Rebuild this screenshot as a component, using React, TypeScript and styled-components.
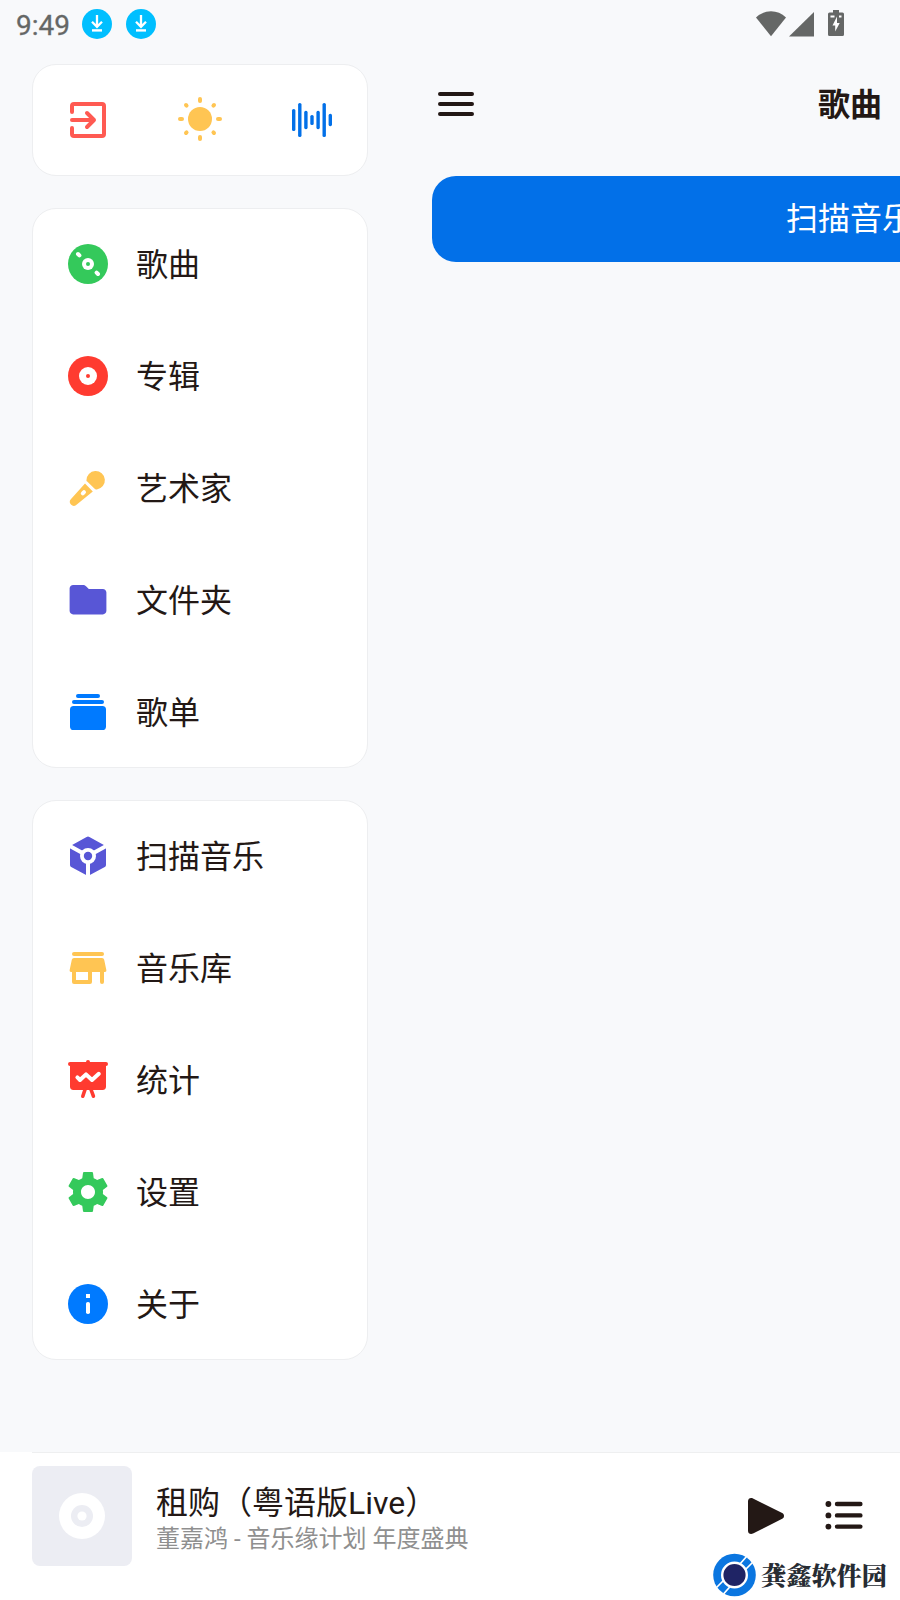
import React from 'react';
import styled, { createGlobalStyle } from 'styled-components';

const GlobalStyle = createGlobalStyle`
  * { box-sizing: border-box; }
  html, body { margin: 0; padding: 0; }
  body {
    background: #f8f9fb;
    color: #231815;
    font-family: Roboto, 'Noto Sans CJK SC', sans-serif;
    overflow: hidden;
  }
`;

const Screen = styled.div`
  width: 900px;
  height: 1600px;
  display: flex;
  flex-direction: column;
  overflow: hidden;
  background: #f8f9fb;
`;

const StatusBar = styled.header`
  height: 48px;
  flex: none;
  display: flex;
  align-items: center;
  padding: 0 56px 0 16px;
  color: #656766;
`;

const Clock = styled.span`
  width: 66px;
  font: 400 28px/48px Roboto, sans-serif;
  -webkit-text-stroke: 0.3px currentColor;
  padding-top: 3px;
`;

const Notices = styled.div`
  display: flex;
  gap: 14px;
  flex: 1;
`;

const Signals = styled.div`
  display: flex;
  align-items: flex-start;
  height: 28px;
`;

const Body = styled.div`
  flex: 1;
  min-height: 0;
  display: flex;
`;

const Drawer = styled.nav`
  width: 400px;
  flex: none;
  padding: 16px 32px 0;
  display: flex;
  flex-direction: column;
  gap: 32px;
`;

const Card = styled.section`
  background: #fff;
  border: 1px solid #edeef0;
  border-radius: 24px;
  overflow: hidden;
`;

const QuickActions = styled(Card)`
  height: 112px;
  display: grid;
  grid-template-columns: repeat(3, 112px);
  place-items: center;
  justify-content: center;
`;

const MenuCard = styled(Card)`
  height: 560px;
  display: flex;
  flex-direction: column;
  justify-content: center;
`;

const MenuRow = styled.a`
  height: 112px;
  flex: none;
  display: flex;
  align-items: center;
  gap: 24px;
  padding-left: 31px;
  font-size: 32px;
  line-height: 48px;
`;

const Label = styled.span`
  white-space: nowrap;
  padding-top: 2px;
`;

const Page = styled.main`
  width: 900px;
  flex: none;
  padding: 0 32px;
`;

const TitleBar = styled.div`
  height: 112px;
  display: grid;
  grid-template-columns: 48px 1fr 48px;
  align-items: center;
`;

const Title = styled.h1`
  margin: 0;
  padding-top: 2px;
  text-align: center;
  font-size: 32px;
  line-height: 48px;
  font-weight: 700;
`;

const ScanButton = styled.button`
  margin-top: 16px;
  width: 100%;
  height: 86px;
  border: 0;
  border-radius: 24px;
  background: #0270e8;
  color: #fff;
  font: 400 32px/48px Roboto, 'Noto Sans CJK SC', sans-serif;
`;

const Player = styled.footer`
  position: relative;
  height: 148px;
  flex: none;
  background: #fff;
  padding: 14px 32px 0;
  display: flex;
  align-items: flex-start;
`;

const Divider = styled.div`
  position: absolute;
  top: 0;
  left: 32px;
  right: 0;
  height: 1px;
  background: #eeeff0;
`;

const Cover = styled.div`
  width: 100px;
  height: 100px;
  border-radius: 8px;
  background: #ecedf3;
  display: grid;
  place-items: center;
`;

const Track = styled.div`
  flex: 1;
  padding: 16px 0 0 24px;
  white-space: nowrap;
`;

const Song = styled.div`
  font-size: 32px;
  line-height: 42px;
`;

const Artist = styled.div`
  font-size: 24px;
  line-height: 30px;
  color: #8f8f8f;
`;

const Controls = styled.div`
  display: flex;
  gap: 30px;
  padding-top: 26px;
`;

const Watermark = styled.div`
  position: absolute;
  left: 713px;
  top: 100px;
  display: flex;
  align-items: center;
  gap: 5px;
  height: 46px;
  color: #272c33;
  white-space: nowrap;
`;

const Brand = styled.span`
  font: 900 25.2px/46px 'Noto Serif CJK SC', 'Noto Sans CJK SC', serif;
  padding-bottom: 3px;
`;

const Svg = styled.svg<{ $tint?: string }>`
  display: block;
  flex: none;
  overflow: visible;
  color: ${(p) => p.$tint ?? 'inherit'};
`;

type GlyphProps = { tint?: string; children: React.ReactNode };

const Glyph = ({ tint, children }: GlyphProps) => (
  <Svg $tint={tint} width="48" height="48" viewBox="0 0 24 24" fill="currentColor">
    {children}
  </Svg>
);

const GREEN = '#34c95b';
const RED = '#ff3b30';
const AMBER = '#ffc553';
const PURPLE = '#5856d6';
const BLUE = '#007aff';

const stroke = (width = 2) => ({
  fill: 'none',
  stroke: 'currentColor',
  strokeWidth: width,
  strokeLinecap: 'round' as const,
  strokeLinejoin: 'round' as const,
});

const ExitIcon = () => (
  <Glyph tint="#ff5a52">
    <g {...stroke()}>
      <path d="M4 8V5a1 1 0 0 1 1-1h14a1 1 0 0 1 1 1v14a1 1 0 0 1-1 1H5a1 1 0 0 1-1-1v-3" />
      <path d="M4 12h11M11.5 8.5 15 12l-3.5 3.5" />
    </g>
  </Glyph>
);

const SunIcon = () => (
  <Glyph tint={AMBER}>
    <g transform="translate(0 -.5)">
      <circle cx="12" cy="12" r="6" />
      {[0, 90, 180, 270].map((a) => (
        <path key={a} d="M12 2v1" transform={`rotate(${a} 12 12)`} {...stroke(2)} />
      ))}
      {[45, 135, 225, 315].map((a) => (
        <path key={a} d="M12 2.1v.4" transform={`rotate(${a} 12 12)`} {...stroke(2)} />
      ))}
    </g>
  </Glyph>
);

const WaveIcon = () => (
  <Glyph tint="#0270e8">
    {[
      [2, 11],
      [5.05, 17],
      [8.1, 9.2],
      [11.15, 5],
      [14.2, 9.2],
      [17.25, 17],
      [20.3, 6.2],
    ].map(([x, h]) => (
      <rect key={x} x={x} y={12 - h / 2} width="1.7" height={h} rx=".8" />
    ))}
  </Glyph>
);

const SongIcon = () => (
  <Glyph tint={GREEN}>
    <circle cx="12" cy="12" r="10" />
    <circle cx="12" cy="12" r="3" fill="#fff" />
    <circle cx="12" cy="12" r="1" />
    <path d="m7 7 .7.7m8.600 8.600.7.7" {...stroke(2)} stroke="#fff" />
  </Glyph>
);

const AlbumIcon = () => (
  <Glyph tint={RED}>
    <circle cx="12" cy="12" r="10" />
    <circle cx="12" cy="12" r="4.500" fill="#fff" />
    <circle cx="12" cy="12" r="1" />
  </Glyph>
);

const MicIcon = () => (
  <Glyph tint={AMBER}>
    <path d="M11.200 8.200a4.620 4.620 0 1 1 5.200 4.500c-.5.1-.8 0-1.200-.4l-3.600-3.500c-.2-.2-.3-.3-.4-.6z" />
    <path d="M10.500 9.700 14.400 13.800 6.100 20.500a2 2 0 0 1-2.700-2.900z" />
    <path d="m9.400 14.700.6-.6" {...stroke(2)} stroke="#fff" />
  </Glyph>
);

const FolderIcon = () => (
  <Glyph tint={PURPLE}>
    <path d="M4.600 4.500h4.800c.7 0 1.200.2 1.600.6l1.400 1.400h7c1 0 1.800.8 1.800 1.800v9.100c0 1-.8 1.800-1.800 1.800H4.600c-1 0-1.800-.8-1.800-1.800V6.300c0-1 .8-1.800 1.800-1.800z" />
  </Glyph>
);

const PlaylistIcon = () => (
  <Glyph tint={BLUE}>
    <rect x="6" y="3" width="12" height="2" rx="1" />
    <rect x="4" y="6" width="16" height="2" rx="1" />
    <rect x="3" y="9" width="18" height="12" rx="1.800" />
  </Glyph>
);

const CubeIcon = () => (
  <Glyph tint={PURPLE}>
    <path d="M11.300 2.500q.7-.4 1.400 0L20.400 6.700q.6.3.6 1v8.800q0 .7-.6 1L12.700 21.600q-.7.4-1.400 0L3.600 17.500q-.6-.3-.6-1V7.700q0-.7.6-1z" />
    <path d="M12 12 2 6.500M12 12l10-5.500M12 12v11" stroke="#fff" strokeWidth="2" />
    <circle cx="12" cy="12" r="4" fill="#fff" />
    <circle cx="12" cy="12" r="2.100" />
  </Glyph>
);

const StoreIcon = () => (
  <Glyph tint={AMBER}>
    <rect x="4" y="4" width="16" height="2" rx="1" />
    <path d="M5 7h14q.9 0 1.100.9l1.100 5.200q.1.9-.7.9H20v5a1 1 0 0 1-2 0v-5h-4v5a1 1 0 0 1-1 1H5a1 1 0 0 1-1-1v-5h-.5q-.8 0-.7-.9l1.100-5.200Q4.100 7 5 7zm1 7v4h6v-4z" />
  </Glyph>
);

const StatsIcon = () => (
  <Glyph tint={RED}>
    <path d="M3 4h18v11.300a1.700 1.700 0 0 1-1.700 1.700H4.700A1.700 1.700 0 0 1 3 15.300z" />
    <path d="M3 4h18M12 3v1" {...stroke(2)} />
    <path d="m10.600 16.500-1.200 3.600M13.400 16.500l1.300 3.600" {...stroke(1.8)} />
    <path d="M6.700 10.700 8 12l3-2.800 3 2.800 3.400-3.100" {...stroke(2)} stroke="#fff" />
  </Glyph>
);

const SettingsIcon = () => (
  <Glyph tint={GREEN}>
    <path d="M19.43 12.98c.04-.32.07-.64.07-.98s-.03-.66-.07-.98l2.11-1.65c.19-.15.24-.42.12-.64l-2-3.46c-.12-.22-.39-.3-.61-.22l-2.49 1c-.52-.4-1.08-.73-1.69-.98l-.38-2.65C14.46 2.18 14.25 2 14 2h-4c-.25 0-.46.18-.49.42l-.38 2.65c-.61.25-1.17.59-1.69.98l-2.49-1c-.23-.09-.49 0-.61.22l-2 3.46c-.13.22-.07.49.12.64l2.11 1.65c-.04.32-.07.65-.07.98s.03.66.07.98l-2.11 1.65c-.19.15-.24.42-.12.64l2 3.46c.12.22.39.3.61.22l2.49-1c.52.4 1.08.73 1.69.98l.38 2.65c.03.24.24.42.49.42h4c.25 0 .46-.18.49-.42l.38-2.65c.61-.25 1.17-.59 1.69-.98l2.49 1c.23.09.49 0 .61-.22l2-3.46c.12-.22.07-.49-.12-.64l-2.11-1.65zM12 15.5c-1.93 0-3.5-1.57-3.5-3.5s1.57-3.5 3.5-3.5 3.5 1.57 3.5 3.5-1.57 3.5-3.5 3.5z" />
  </Glyph>
);

const InfoIcon = () => (
  <Glyph tint={BLUE}>
    <circle cx="12" cy="12" r="10" />
    <rect x="11" y="7" width="2" height="2" fill="#fff" />
    <rect x="11" y="11" width="2" height="6" rx=".9" fill="#fff" />
  </Glyph>
);

const MenuIcon = () => (
  <Glyph>
    <path d="M4 7h16M4 12h16M4 17h16" {...stroke(2)} />
  </Glyph>
);

const PlayIcon = () => (
  <Glyph>
    <path d="M3 4.600C3 3.200 4.300 2.600 5.500 3.200l14.600 7.300c1.200.6 1.200 2.300 0 2.900L5.500 20.800C4.300 21.400 3 20.800 3 19.400z" />
  </Glyph>
);

const QueueIcon = () => (
  <Glyph>
    <g {...stroke(2.2)}>
      <path d="M8.500 6h11.700M8.500 11.700h11.700M8.500 17.300h11.700" />
    </g>
    {[6, 11.7, 17.3].map((y) => (
      <circle key={y} cx="4.200" cy={y} r="1.450" />
    ))}
  </Glyph>
);

const DownloadBadge = () => (
  <Svg width="30" height="30" viewBox="0 0 30 30">
    <circle cx="15" cy="15" r="15" fill="#00bfff" />
    <path d="M15 6v11M10 12.800l5 5 5-5" fill="none" stroke="#fff" strokeWidth="2.300" />
    <path d="M10 21.400h10" stroke="#fff" strokeWidth="2.400" />
  </Svg>
);

const StatusIcons = () => (
  <Svg width="88" height="28" viewBox="0 0 88 28" fill="currentColor">
    <path d="M0 7.500Q6.500 1.300 15 1.300T30 7.500L15 26.200z" />
    <path d="M33 26.500 58 2v24.500z" />
    <path d="M77 0h6v2.500h3.500Q88 2.500 88 4v20.500q0 1.500-1.500 1.500h-13Q72 26 72 24.500V4q0-1.500 1.500-1.500H77z" />
    <path d="M81 6.500v6.500h2.700l-4.500 8.500V15.500h-2.700z" fill="#fff" />
    <path d="M74.500 5.500h4v2h-4zM83 5.500h2.500v2H83z" fill="#fff" />
  </Svg>
);

const CoverDisc = () => (
  <Svg width="46" height="46" viewBox="0 0 46 46">
    <circle cx="23" cy="23" r="23" fill="#fff" />
    <circle cx="23" cy="23" r="11" fill="#ecedf3" />
    <circle cx="23" cy="23" r="4.600" fill="#fff" />
  </Svg>
);

const BrandMark = () => (
  <Svg width="43" height="44" viewBox="0 0 43 44">
    <circle cx="21.500" cy="22" r="21.300" fill="#0b76e0" />
    <path d="M26.500 11.500 34 3M32 17 40 9M3.500 34.500l8-8M10.500 41l8-9" stroke="#fff" strokeWidth="1.700" />
    <circle cx="21.500" cy="22" r="12.300" fill="#1f2465" stroke="#fff" strokeWidth="2.400" />
  </Svg>
);

const libraryItems = [
  { icon: <SongIcon />, label: '歌曲' },
  { icon: <AlbumIcon />, label: '专辑' },
  { icon: <MicIcon />, label: '艺术家' },
  { icon: <FolderIcon />, label: '文件夹' },
  { icon: <PlaylistIcon />, label: '歌单' },
];

const toolItems = [
  { icon: <CubeIcon />, label: '扫描音乐' },
  { icon: <StoreIcon />, label: '音乐库' },
  { icon: <StatsIcon />, label: '统计' },
  { icon: <SettingsIcon />, label: '设置' },
  { icon: <InfoIcon />, label: '关于' },
];

const Menu = ({ items }: { items: typeof libraryItems }) => (
  <MenuCard>
    {items.map((item) => (
      <MenuRow key={item.label}>
        {item.icon}
        <Label>{item.label}</Label>
      </MenuRow>
    ))}
  </MenuCard>
);

export default function App() {
  return (
    <>
      <GlobalStyle />
      <Screen>
        <StatusBar>
          <Clock>9:49</Clock>
          <Notices>
            <DownloadBadge />
            <DownloadBadge />
          </Notices>
          <Signals>
            <StatusIcons />
          </Signals>
        </StatusBar>
        <Body>
          <Drawer>
            <QuickActions>
              <ExitIcon />
              <SunIcon />
              <WaveIcon />
            </QuickActions>
            <Menu items={libraryItems} />
            <Menu items={toolItems} />
          </Drawer>
          <Page>
            <TitleBar>
              <MenuIcon />
              <Title>歌曲</Title>
            </TitleBar>
            <ScanButton>扫描音乐</ScanButton>
          </Page>
        </Body>
        <Player>
          <Divider />
          <Cover>
            <CoverDisc />
          </Cover>
          <Track>
            <Song>租购（粤语版Live）</Song>
            <Artist>董嘉鸿 - 音乐缘计划 年度盛典</Artist>
          </Track>
          <Controls>
            <PlayIcon />
            <QueueIcon />
          </Controls>
          <Watermark>
            <BrandMark />
            <Brand>龚鑫软件园</Brand>
          </Watermark>
        </Player>
      </Screen>
    </>
  );
}
